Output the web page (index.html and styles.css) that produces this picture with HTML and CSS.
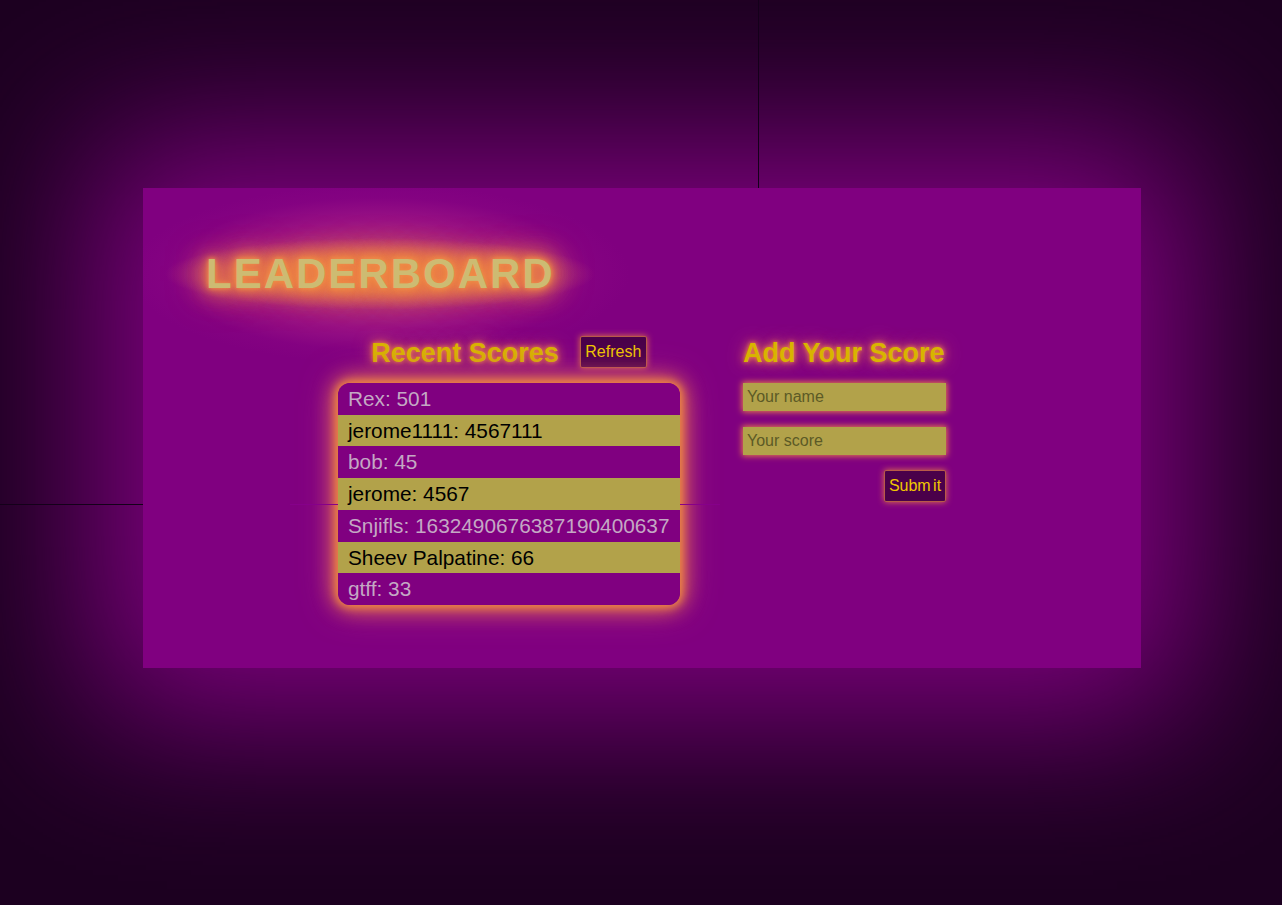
FILE: index.html
```html
<!DOCTYPE html>
<html lang="en">
<head>
<meta charset="utf-8">
<title>Leaderboard</title>
<link rel="stylesheet" href="styles.css">
</head>
<body>
  <div class="line line-v"></div>
  <div class="line line-h"></div>
  <main class="panel">
    <h1 class="title">LEADERBOARD</h1>
    <div class="columns">
      <section class="col col-scores">
        <div class="col-head">
          <h2 class="subtitle">Recent Scores</h2>
          <button class="btn btn-refresh">Refresh</button>
        </div>
        <ul class="score-list">
          <li class="row row-odd">Rex: 501</li>
          <li class="row row-even">jerome1111: 4567111</li>
          <li class="row row-odd">bob: 45</li>
          <li class="row row-even">jerome: 4567</li>
          <li class="row row-odd">Snjifls: 1632490676387190400637</li>
          <li class="row row-even">Sheev Palpatine: 66</li>
          <li class="row row-odd">gtff: 33</li>
        </ul>
      </section>
      <section class="col col-form">
        <div class="col-head">
          <h2 class="subtitle">Add Your Score</h2>
        </div>
        <form class="score-form">
          <input class="field" type="text" placeholder="Your name">
          <input class="field" type="text" placeholder="Your score">
          <div class="form-actions">
            <button class="btn btn-submit" type="button">Subm it</button>
          </div>
        </form>
      </section>
    </div>
    <div class="seg seg-left"></div>
    <div class="seg seg-right"></div>
  </main>
</body>
</html>
```

FILE: styles.css
```css
html, body {
  margin: 0;
  padding: 0;
}

body {
  background: #1c0020;
  min-height: 905px;
  font-family: "Liberation Sans", Arial, sans-serif;
  position: relative;
  overflow: hidden;
}

.line {
  position: absolute;
  background: #14001a;
  z-index: 2;
}

.line-v {
  left: 758px;
  top: 0;
  width: 1px;
  height: 188px;
}

.line-h {
  left: 0;
  top: 504px;
  width: 143px;
  height: 1px;
}

.panel {
  position: relative;
  width: 998px;
  height: 480px;
  margin: 188px 0 0 143px;
  background:
    radial-gradient(ellipse 215px 36px at 237px 86px,
      rgba(232, 136, 72, 0.9) 0%,
      rgba(230, 128, 76, 0.75) 50%,
      rgba(220, 110, 90, 0.3) 80%,
      rgba(220, 100, 100, 0) 100%),
    radial-gradient(ellipse 250px 90px at 237px 86px,
      rgba(220, 100, 100, 0.7) 0%,
      rgba(210, 80, 116, 0.6) 30%,
      rgba(190, 44, 138, 0.4) 60%,
      rgba(160, 16, 140, 0.12) 85%,
      rgba(140, 0, 136, 0) 100%),
    #800080;
  box-shadow: 0 0 150px 50px #800080;
  box-sizing: border-box;
  padding: 62px 0 0 0;
}

.title {
  margin: 0 0 0 63px;
  font-size: 42px;
  line-height: 48px;
  font-weight: bold;
  letter-spacing: 2px;
  color: #cdbb72;
  text-shadow:
    0 0 4px #f09048,
    0 0 10px #f08c44,
    0 0 18px #f08444,
    0 0 24px #ee8046,
    0 0 30px #ec7a4a,
    0 0 40px #e06a5c;
  display: inline-block;
}

.columns {
  display: flex;
  justify-content: center;
  gap: 63px;
  margin-top: 38px;
}

.col {
  display: flex;
  flex-direction: column;
}

.col-scores {
  width: 342px;
}

.col-form {
  width: 203px;
}

.col-head {
  display: flex;
  align-items: flex-start;
  height: 31px;
  margin-bottom: 16px;
}

.col-scores .col-head {
  justify-content: center;
  gap: 21px;
}

.subtitle {
  margin: 2px 0 0 0;
  font-size: 27px;
  line-height: 31px;
  font-weight: bold;
  color: #d8b400;
  text-shadow:
    0 0 4px #f08a40,
    0 0 10px #e87850,
    0 0 18px #d86068;
  white-space: nowrap;
}

.btn {
  font-family: "Liberation Sans", Arial, sans-serif;
  font-size: 16px;
  line-height: 18px;
  color: #f0c800;
  background: #4a004a;
  border: 1px solid #b85a48;
  border-radius: 2px;
  padding: 6px 4px;
  box-shadow: 0 0 6px #e07848;
  cursor: pointer;
}

.btn-refresh {
  width: 67px;
}

.btn-submit {
  width: 62px;
  padding: 6px 0;
  word-spacing: -2px;
}

.score-list {
  list-style: none;
  margin: 0;
  padding: 0;
  border-radius: 12px;
  overflow: hidden;
  box-shadow:
    0 0 8px 2px #f08a40,
    0 0 20px 4px #e0704c,
    0 0 36px #c84878;
}

.row {
  font-size: 20.8px;
  line-height: 23.7px;
  padding: 4px 10px;
  white-space: nowrap;
}

.row-odd {
  background: #800080;
  color: #c4a8c4;
}

.row-even {
  background: #b2a24a;
  color: #000;
}

.score-form {
  display: flex;
  flex-direction: column;
  gap: 16px;
}

.field {
  display: block;
  width: 203px;
  height: 28px;
  box-sizing: border-box;
  border: none;
  padding: 0 4px;
  background: #b2a24a;
  font-family: "Liberation Sans", Arial, sans-serif;
  font-size: 16px;
  color: #222;
  box-shadow: 0 0 6px 1px #e88048;
  outline: none;
}

.field::placeholder {
  color: #5c5a26;
}

.form-actions {
  display: flex;
  justify-content: flex-end;
  margin-top: -1px;
}

.seg {
  position: absolute;
  top: 316px;
  height: 1px;
  background: #86008a;
  z-index: 3;
}

.seg-left {
  left: 147px;
  width: 48px;
}

.seg-right {
  left: 537px;
  width: 40px;
}
```
